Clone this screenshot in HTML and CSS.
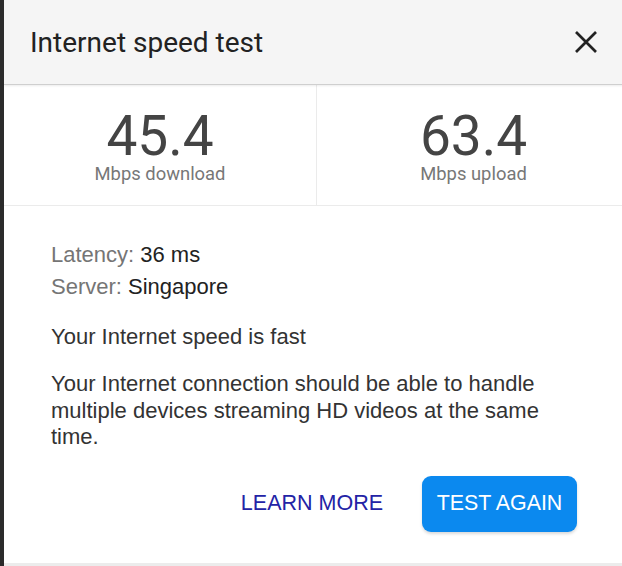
FILE: index.html
```html
<!DOCTYPE html>
<html>
<head>
<meta charset="utf-8">
<link rel="stylesheet" href="styles.css">
</head>
<body>
<div class="dialog">
  <div class="header">
    <h1 class="title">Internet speed test</h1>
    <button class="close" aria-label="Close">
      <svg width="24" height="24" viewBox="0 0 24 24"><path d="M2 2 L22 22 M22 2 L2 22" stroke="#222" stroke-width="2.7" fill="none"/></svg>
    </button>
  </div>
  <div class="stats">
    <div class="stat">
      <div class="num">45.4</div>
      <div class="unit">Mbps download</div>
    </div>
    <div class="stat">
      <div class="num">63.4</div>
      <div class="unit">Mbps upload</div>
    </div>
  </div>
  <div class="content">
    <div class="meta"><span class="key">Latency:</span> 36 ms</div>
    <div class="meta"><span class="key">Server:</span> Singapore</div>
    <p class="verdict">Your Internet speed is fast</p>
    <p class="desc">Your Internet connection should be able to handle multiple devices streaming HD videos at the same time.</p>
    <div class="actions">
      <button class="btn-text">LEARN MORE</button>
      <button class="btn-primary">TEST AGAIN</button>
    </div>
  </div>
</div>
</body>
</html>
```
FILE: styles.css
```css
html, body {
  margin: 0;
  padding: 0;
}
body {
  background: #2b2b2b;
  overflow: hidden;
  height: 566px;
}
.dialog {
  margin-left: 4px;
  width: 626px;
  height: 563px;
  background: #fff;
  border-bottom: 3px solid #ececec;
  font-family: "Liberation Sans", Arial, sans-serif;
  overflow: hidden;
}
.header {
  height: 85px;
  background: #f5f5f5;
  border-bottom: 1px solid #cfcfcf;
  box-shadow: 0 1px 2px rgba(0,0,0,0.08);
  display: flex;
  align-items: center;
  justify-content: space-between;
  padding: 0 32px 0 26px;
  box-sizing: border-box;
  position: relative;
}
.title {
  margin: 0;
  font-family: Roboto, "Liberation Sans", sans-serif;
  font-weight: 400;
  font-size: 28px;
  color: #222;
}
.close {
  border: 0;
  background: none;
  padding: 0;
  width: 24px;
  height: 24px;
  display: flex;
}
.stats {
  display: grid;
  grid-template-columns: 313px 1fr;
  height: 121px;
  border-bottom: 1px solid #ebebeb;
  box-sizing: border-box;
}
.stat {
  display: flex;
  flex-direction: column;
  align-items: center;
  padding-top: 23px;
  font-family: Roboto, "Liberation Sans", sans-serif;
}
.stat:first-child {
  border-right: 1px solid #ebebeb;
}
.num {
  font-size: 55px;
  line-height: 56px;
  color: #444;
}
.unit {
  font-size: 18.4px;
  line-height: 20px;
  color: #777;
  margin-top: 0;
}
.content {
  padding: 33px 53px 0 47px;
}
.meta {
  font-size: 22px;
  line-height: 32px;
  color: #222;
}
.key {
  color: #757575;
}
.verdict {
  margin: 21px 0 0;
  font-size: 22px;
  line-height: 26.5px;
  color: #333;
}
.desc {
  margin: 20.5px 0 0;
  font-size: 22px;
  line-height: 26.5px;
  color: #333;
  width: 510px;
}
.actions {
  display: flex;
  justify-content: flex-end;
  align-items: center;
  gap: 39px;
  margin-top: 25px;
}
.btn-text {
  border: 0;
  background: none;
  padding: 0;
  font-family: "Liberation Sans", Arial, sans-serif;
  font-size: 21.5px;
  color: #2323a6;
}
.btn-primary {
  border: 0;
  background: #0b89ef;
  color: #fff;
  font-family: "Liberation Sans", Arial, sans-serif;
  font-size: 21.4px;
  height: 56px;
  width: 155px;
  border-radius: 9px;
  box-shadow: 0 2px 3px rgba(0,0,0,0.15);
}
```
